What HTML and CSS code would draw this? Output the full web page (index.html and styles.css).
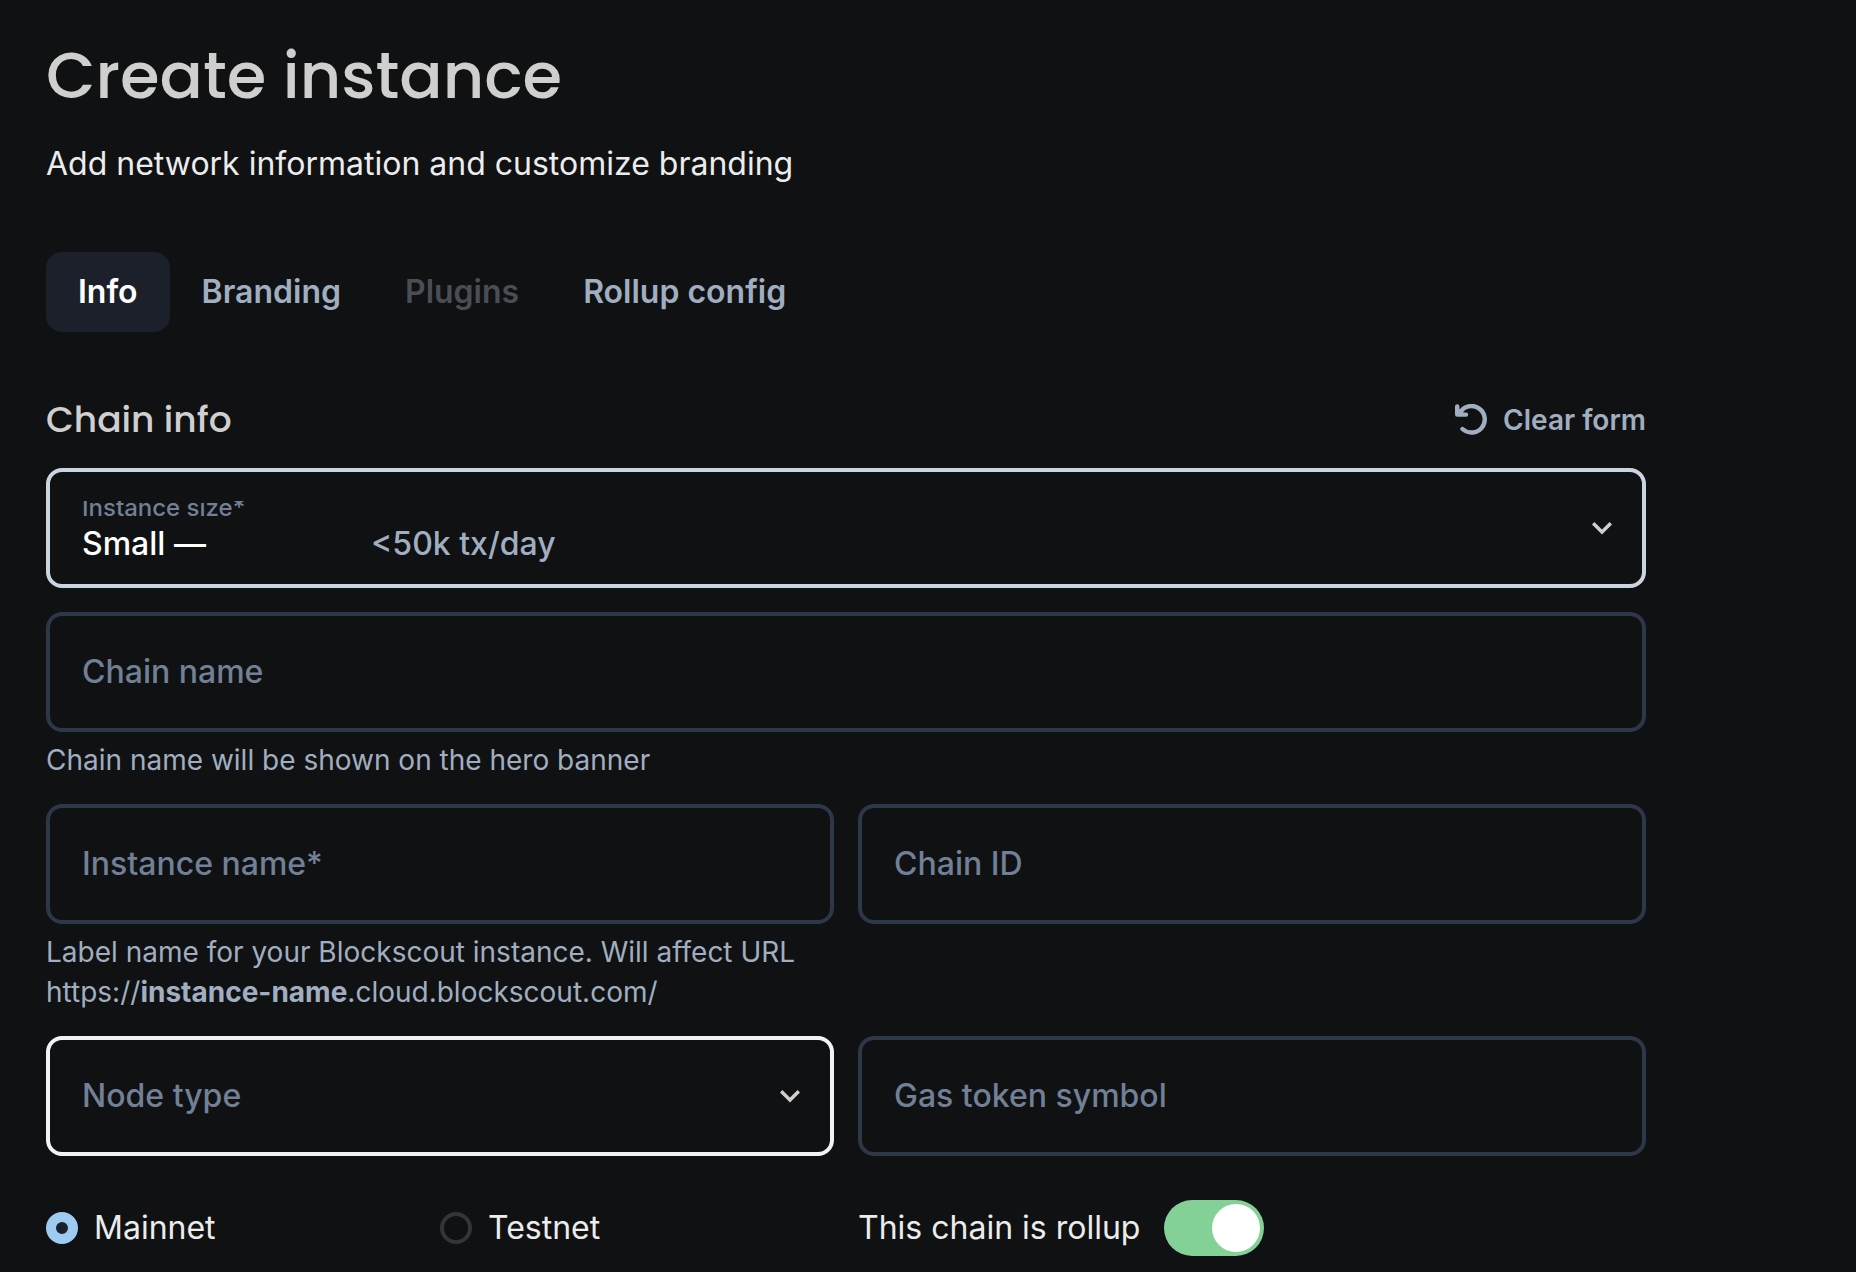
FILE: index.html
```html
<!DOCTYPE html>
<html lang="en">
<head>
<meta charset="utf-8">
<title>Create instance</title>
<link rel="stylesheet" href="styles.css">
</head>
<body>
<main class="page">
  <h1 class="title">Create instance</h1>
  <p class="subtitle">Add network information and customize branding</p>
  <nav class="tabs">
    <a class="tab tab-active">Info</a>
    <a class="tab">Branding</a>
    <a class="tab tab-disabled">Plugins</a>
    <a class="tab">Rollup config</a>
  </nav>
  <header class="section-head">
    <h2 class="section-title">Chain info</h2>
    <button class="clear" type="button">
      <svg class="clear-icon" width="34" height="32" viewBox="0 0 34 32" fill="none" stroke="currentColor" stroke-width="4.400" stroke-linecap="round">
        <path d="M7.500 25A13.250 13.250 0 1 0 5 8.700"/>
        <path d="M2.200 2.400v8.200h8.800" stroke-linejoin="round"/>
        <path d="M3 4l7 6H3z" fill="currentColor" stroke="none"/>
      </svg>
      <span>Clear form</span>
    </button>
  </header>
  <form class="form">
    <div class="field field-filled">
      <div class="field-body">
        <div class="float-label"><span class="float-text">Instance size*</span></div>
        <div class="value"><span class="value-main">Small —</span><span class="value-note">&lt;50k tx/day</span></div>
      </div>
      <svg class="chevron" width="24" height="16" viewBox="0 0 24 16" fill="none" stroke="currentColor" stroke-width="3.400"><path d="M3.200 3.200L12 12l8.800-8.800"/></svg>
    </div>
    <div class="group">
      <div class="field"><span class="placeholder">Chain name</span></div>
      <p class="hint">Chain name will be shown on the hero banner</p>
    </div>
    <div class="row">
      <div class="group">
        <div class="field"><span class="placeholder">Instance name*</span></div>
        <p class="hint">Label name for your Blockscout instance. Will affect URL<br>https://<b>instance-name</b>.cloud.blockscout.com/</p>
      </div>
      <div class="field"><span class="placeholder">Chain ID</span></div>
    </div>
    <div class="row">
      <div class="field field-focus">
        <span class="placeholder">Node type</span>
        <svg class="chevron" width="24" height="16" viewBox="0 0 24 16" fill="none" stroke="currentColor" stroke-width="3.400"><path d="M3.200 3.200L12 12l8.800-8.800"/></svg>
      </div>
      <div class="field"><span class="placeholder">Gas token symbol</span></div>
    </div>
    <div class="row options">
      <div class="radios">
        <label class="option"><span class="radio radio-on"></span>Mainnet</label>
        <label class="option"><span class="radio"></span>Testnet</label>
      </div>
      <label class="toggle">This chain is rollup<span class="switch"><span class="thumb"></span></span></label>
    </div>
  </form>
</main>
</body>
</html>
```
FILE: styles.css
```css
* { box-sizing: border-box; }
body {
  margin: 0;
  height: 1272px;
  overflow: hidden;
  background: #101112;
  color: #ececec;
  font-family: Inter, "Liberation Sans", sans-serif;
  font-size: 32px;
  line-height: 48px;
}
.page {
  width: 1646px;
  height: 1272px;
  padding: 36px 0 0 46px;
}
.title, .section-title {
  margin: 0;
  color: #cfcfcf;
  font-family: Poppins, Inter, sans-serif;
  font-weight: 500;
}
.title { font-size: 64px; line-height: 80px; }
.subtitle { margin: 24px 0 0; }
.tabs { display: flex; margin-top: 64px; }
.tab {
  height: 80px;
  padding: 0 32px;
  border-radius: 16px;
  line-height: 80px;
  font-weight: 600;
  color: #a0aec0;
}
.tab-active { background: #1c202a; color: #fff; }
.tab-disabled { color: #494e54; }
.section-head {
  display: flex;
  justify-content: space-between;
  align-items: center;
  height: 64px;
  margin-top: 56px;
}
.section-title { font-size: 36px; line-height: 48px; }
.clear {
  display: flex;
  align-items: center;
  gap: 14px;
  padding: 0;
  border: 0;
  background: none;
  color: #a0aec0;
  font: 600 28px/40px Inter, sans-serif;
}
.form { display: grid; gap: 24px; margin-top: 16px; }
.row { display: grid; grid-template-columns: 1fr 1fr; gap: 24px; align-items: start; }
.field {
  display: flex;
  align-items: center;
  justify-content: space-between;
  height: 120px;
  padding: 0 28px 0 32px;
  border: 4px solid #2d3748;
  border-radius: 16px;
}
.field-filled { border-color: #cbd5e0; }
.field-focus { border-color: #f1f3f8; }
.placeholder { color: #718096; font-weight: 500; }
.chevron { color: #cfcfcf; }
.hint { margin: 8px 0 0; font-size: 28px; line-height: 40px; color: #a0aec0; }
.field-body { padding-top: 13px; }
.float-label { height: 23px; margin-bottom: -4px; overflow: hidden; display: flex; align-items: flex-end; }
.float-text { font-size: 24px; line-height: 32px; font-weight: 500; color: #718096; }
.value { display: flex; font-weight: 500; }
.value-main { width: 289px; color: #fff; }
.value-note { color: #a0aec0; }
.options { margin-top: 20px; align-items: center; }
.radios { display: flex; }
.option { display: flex; align-items: center; gap: 16px; width: 394px; }
.radio { width: 32px; height: 32px; border: 4px solid #343536; border-radius: 50%; }
.radio-on { border: 10px solid #9ecbf0; background: #1a202c; }
.toggle { display: flex; align-items: center; gap: 24px; }
.switch {
  display: flex;
  justify-content: flex-end;
  width: 100px;
  height: 56px;
  padding: 4px;
  border-radius: 28px;
  background: #84d197;
}
.thumb { width: 48px; height: 48px; border-radius: 50%; background: #fff; }
```
